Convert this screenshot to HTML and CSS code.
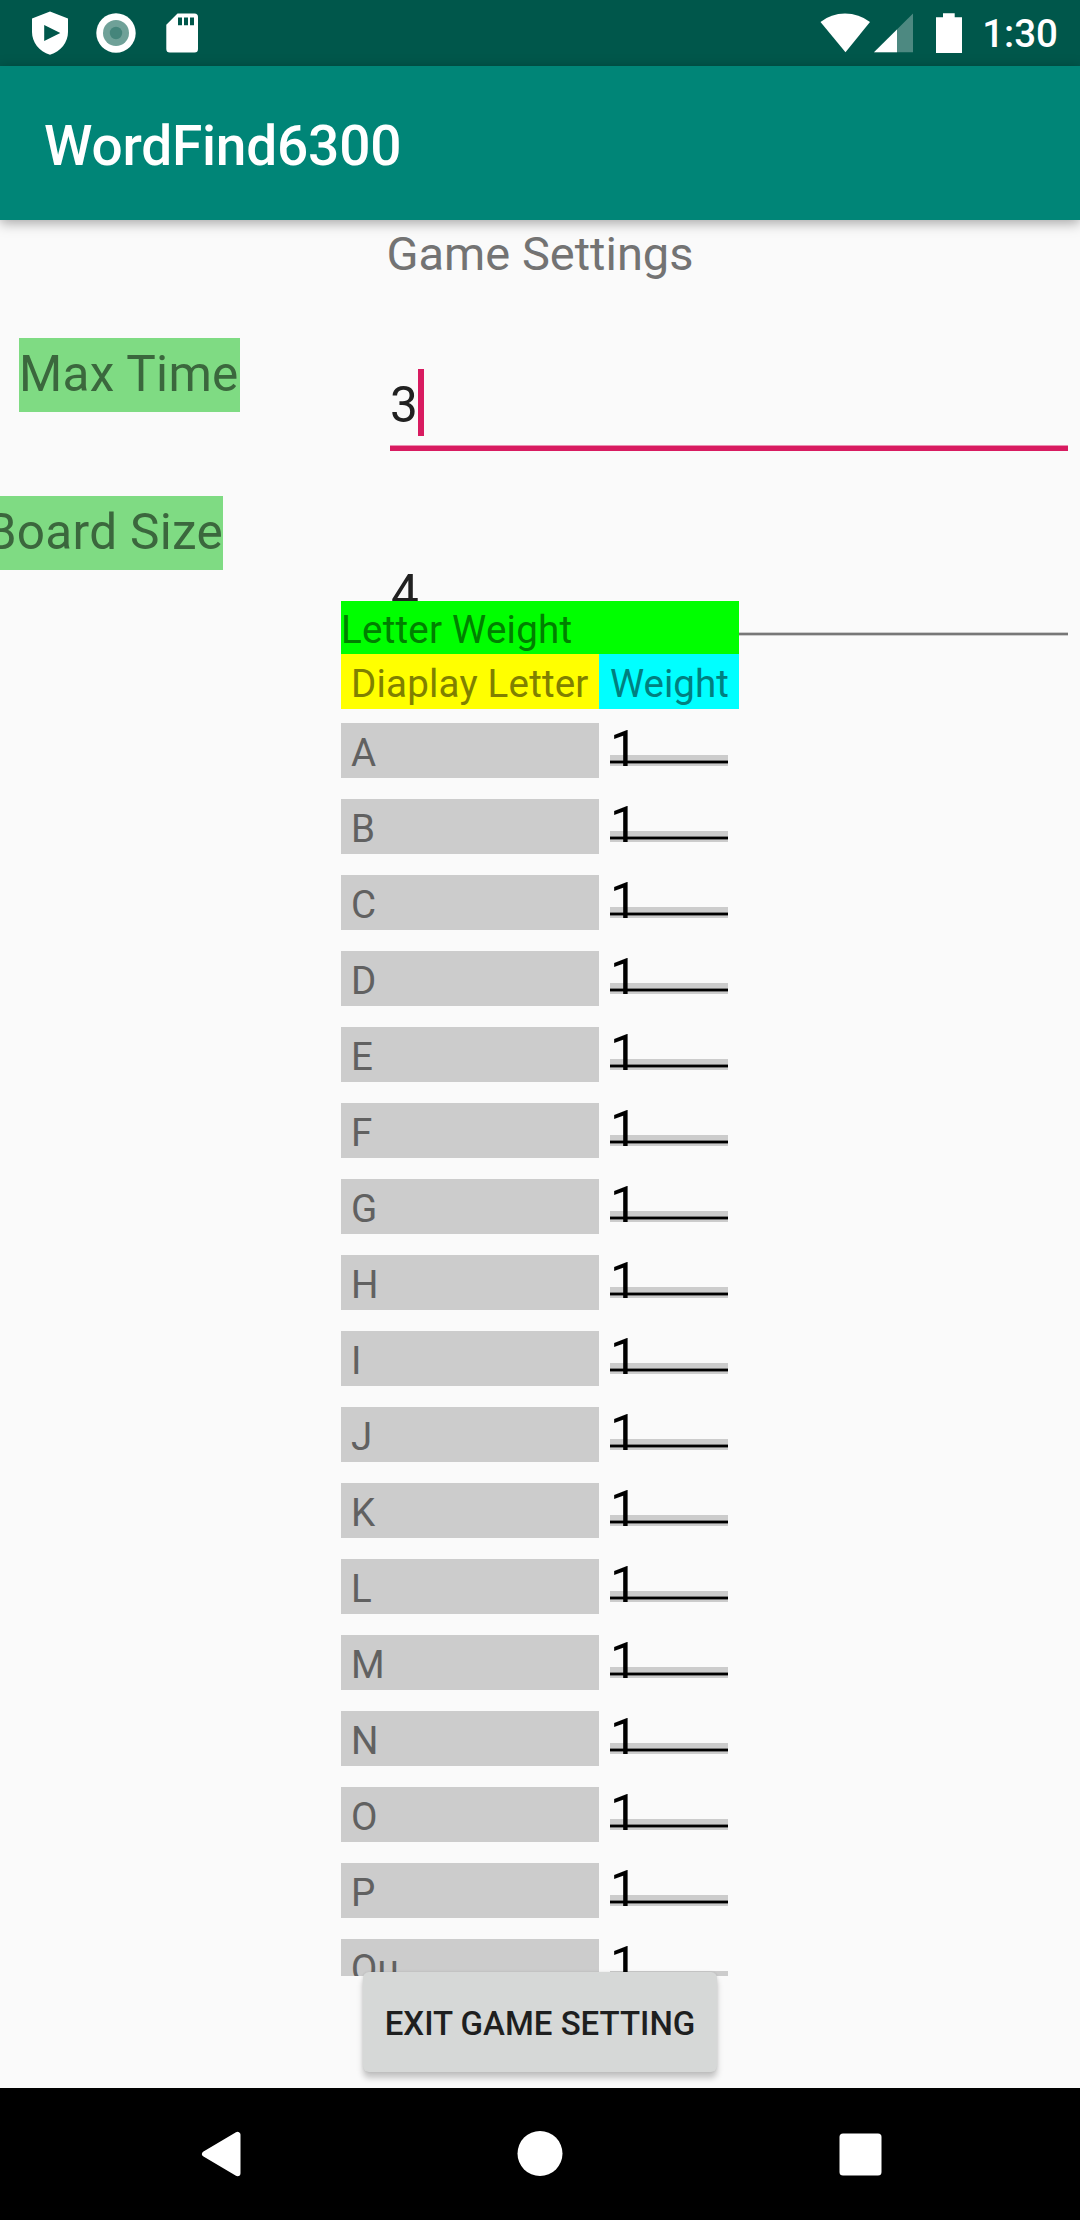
FILE: index.html
```html
<!DOCTYPE html>
<html lang="en">
<head>
<meta charset="utf-8">
<title>WordFind6300</title>
<link rel="stylesheet" href="styles.css">
</head>
<body>
<div class="screen">
  <div class="status-bar">
    <div class="status-left">
      <svg width="36" height="44" viewBox="0 0 36 44"><path fill="#fff" fill-rule="evenodd" d="M18 0.5 36 7.500V21C36 31 29 40.500 18 43.700C7 40.500 0 31 0 21V7.500ZM12.200 14V30L28.300 22Z"/></svg>
      <svg width="40" height="40" viewBox="0 0 40 40"><circle cx="20" cy="20" r="19.700" fill="#fff"/><circle cx="20" cy="20" r="13" fill="#6fa198"/><circle cx="20" cy="20" r="6.200" fill="#45857b"/></svg>
      <svg class="sd" width="32" height="40" viewBox="0 0 32 40"><path fill="#fff" fill-rule="evenodd" d="M11.500 0.500H28.500Q32 0.500 32 4V36Q32 39.500 28.500 39.500H3.800Q0.300 39.500 0.300 36V11.700ZM12 4.500V12.200H16V4.500ZM18 4.500V12.200H22V4.500ZM24 4.500V12.200H28V4.500Z"/></svg>
    </div>
    <div class="status-right">
      <svg class="wifi" width="50" height="40" viewBox="0 0 50 40"><path fill="#fff" d="M0.500 9Q11 0.500 25 0.500T50 9L25.500 39.300Z"/></svg>
      <svg class="signal" width="39" height="40" viewBox="0 0 39 40"><path fill="#fff" fill-opacity="0.300" d="M0 39.300 39 0.500V39.300Z"/><path fill="#fff" d="M0 39.300 23 16.500V39.300Z"/></svg>
      <svg class="battery" width="26" height="40" viewBox="0 0 26 40"><path fill="#fff" d="M7 0.300H18.700V4.300H26V40H0V4.300H7Z"/></svg>
      <span class="clock">1:30</span>
    </div>
  </div>
  <header class="app-bar"><h1>WordFind6300</h1></header>
  <main>
    <h2>Game Settings</h2>
    <div class="field">
      <div class="label-col"><span class="label">Max Time</span></div>
      <div class="input focused"><span>3</span><i class="caret"></i></div>
    </div>
    <div class="field second">
      <div class="label-col"><span class="label">Board Size</span></div>
      <div class="input"><span>4</span></div>
    </div>
    <section class="weights">
      <div class="caption">Letter Weight</div>
      <div class="head"><span class="letter">Diaplay Letter</span><span class="head-weight">Weight</span></div>
      <div class="row"><span class="letter">A</span><span class="weight">1</span></div>
      <div class="row"><span class="letter">B</span><span class="weight">1</span></div>
      <div class="row"><span class="letter">C</span><span class="weight">1</span></div>
      <div class="row"><span class="letter">D</span><span class="weight">1</span></div>
      <div class="row"><span class="letter">E</span><span class="weight">1</span></div>
      <div class="row"><span class="letter">F</span><span class="weight">1</span></div>
      <div class="row"><span class="letter">G</span><span class="weight">1</span></div>
      <div class="row"><span class="letter">H</span><span class="weight">1</span></div>
      <div class="row"><span class="letter">I</span><span class="weight">1</span></div>
      <div class="row"><span class="letter">J</span><span class="weight">1</span></div>
      <div class="row"><span class="letter">K</span><span class="weight">1</span></div>
      <div class="row"><span class="letter">L</span><span class="weight">1</span></div>
      <div class="row"><span class="letter">M</span><span class="weight">1</span></div>
      <div class="row"><span class="letter">N</span><span class="weight">1</span></div>
      <div class="row"><span class="letter">O</span><span class="weight">1</span></div>
      <div class="row"><span class="letter">P</span><span class="weight">1</span></div>
      <div class="row"><span class="letter">Qu</span><span class="weight">1</span></div>
    </section>
    <button class="exit">EXIT GAME SETTING</button>
  </main>
  <nav class="nav-bar">
    <svg width="40" height="46" viewBox="0 0 40 46"><path fill="#fff" stroke="#fff" stroke-width="6" stroke-linejoin="round" d="M4 23 36.500 3.800V42.200Z"/></svg>
    <svg width="46" height="46" viewBox="0 0 46 46"><circle cx="23" cy="22.500" r="22.500" fill="#fff"/></svg>
    <svg width="43" height="43" viewBox="0 0 43 43"><rect x="0.500" y="0.500" width="42" height="42" rx="3.500" fill="#fff"/></svg>
  </nav>
</div>
</body>
</html>
```
FILE: styles.css
```css
* { box-sizing: border-box; }
body { margin: 0; font-family: Roboto, sans-serif; background: #fafafa; }
svg { display: block; flex: none; }

.screen { width: 1080px; height: 2220px; display: flex; flex-direction: column; overflow: hidden; }

.status-bar { height: 66px; flex: none; background: #00574b; display: flex; justify-content: space-between; padding: 0 22px 0 32px; }
.status-left { display: flex; align-items: center; gap: 28px; }
.sd { margin-left: 2px; }
.status-right { display: flex; align-items: center; color: #fff; }
.signal { margin-left: 4px; }
.battery { margin-left: 23px; }
.clock { margin-left: 20px; font-size: 38.5px; font-weight: 500; line-height: 66px; padding-top: 2px; }

.app-bar { height: 154px; flex: none; background: #008577; padding: 6px 44px 0; box-shadow: 0 3px 12px rgba(0, 0, 0, .35); z-index: 1; display: flex; align-items: center; }
h1 { margin: 0; font-size: 55px; font-weight: 500; color: #fff; line-height: 64px; letter-spacing: -.2px; }

main { flex: 1; min-height: 0; display: flex; flex-direction: column; }
h2 { margin: 0; height: 68px; line-height: 68px; text-align: center; font-size: 47px; font-weight: 400; color: #737373; flex: none; }

.field { flex: none; display: flex; height: 163px; padding-right: 12px; }
.label-col { width: 390px; padding: 50px 0 0 19px; }
.label { display: inline-block; height: 74px; line-height: 72px; background: #7fdb83; color: #3b673d; font-size: 49.5px; width: 221px; white-space: nowrap; letter-spacing: .3px; }
.input { flex: 1; margin-top: 81px; display: flex; align-items: flex-start; height: 82px; border-bottom: 5px solid #d81b60; box-shadow: inset 0 -1px #eb8fb1; font-size: 49.5px; line-height: 72px; color: #212121; }
.caret { width: 6px; height: 67px; background: #d81b60; }
.second { height: 184px; }
.second .label-col { padding: 45px 0 0; }
.second .label { width: 223px; display: flex; justify-content: flex-end; }
.second .input { margin-top: 105px; height: 79px; padding: 1px 0 0 1px; border-bottom: 2px solid #777; box-shadow: inset 0 -1px #ccc, 0 1px #ccc; }

.weights { position: relative; width: 398px; height: 1375px; margin: -34px 0 0 341px; overflow: hidden; flex: none; font-size: 38.5px; color: #616161; }
.caption { height: 53px; line-height: 57px; background: #0f0; color: #008000; letter-spacing: .25px; }
.head, .row { display: flex; }
.letter { width: 258px; height: 55px; line-height: 59px; padding-left: 10px; white-space: nowrap; }
.head .letter { background: #ff0; color: #808000; letter-spacing: .2px; }
.head-weight { width: 140px; padding-left: 11px; line-height: 59px; height: 55px; background: #0ff; color: #008080; }
.row { height: 76px; padding-top: 14px; }
.row .letter { background: #ccc; }
.weight { width: 118px; height: 43px; margin-left: 11px; overflow: hidden; font-size: 49.5px; line-height: 52px; color: #000; background: linear-gradient(#777 0 1px, #000 1px 3px, #777 3px 4px) 0 37px / 100% 4px no-repeat, linear-gradient(#ccc, #ccc) 0 100% / 100% 11px no-repeat; }

.exit { position: relative; flex: none; width: 354px; height: 100px; margin: -4px 0 0 363px; padding: 3px 0 0; border: 0; border-radius: 6px; background: #d6d8d7; color: #1e1f1f; font: 500 33px Roboto, sans-serif; white-space: nowrap; box-shadow: 0 6px 6px rgba(0, 0, 0, .22), 0 0 3px rgba(0, 0, 0, .1); }

.nav-bar { height: 132px; flex: none; background: #000; display: flex; align-items: center; justify-content: space-between; padding: 0 198px 0 201px; }
```
